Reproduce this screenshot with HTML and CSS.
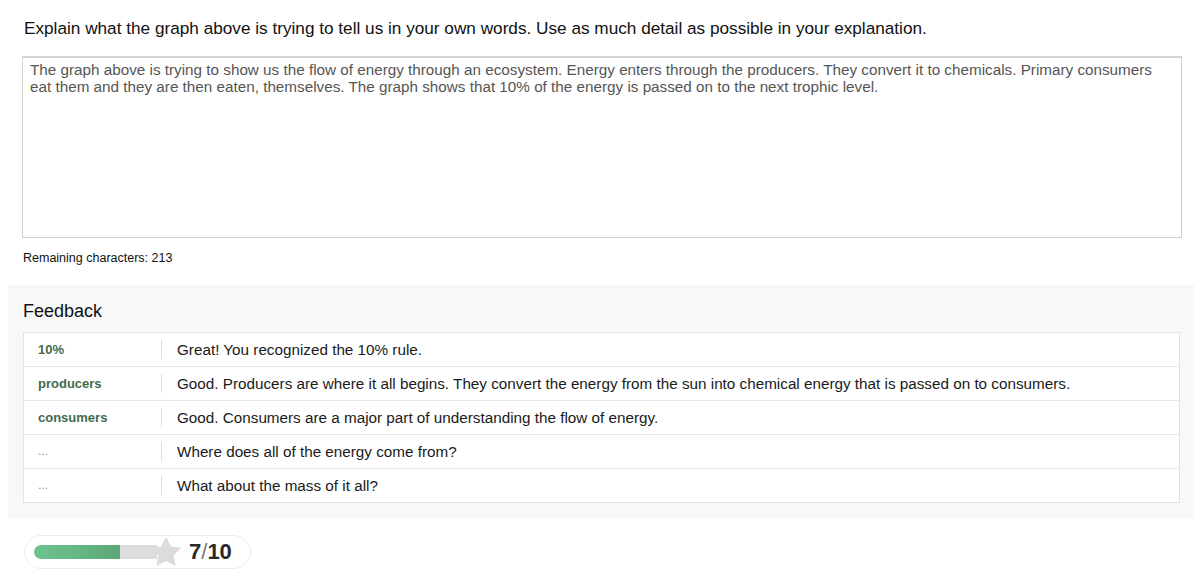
FILE: index.html
```html
<!DOCTYPE html>
<html>
<head>
<meta charset="utf-8">
<link rel="stylesheet" href="styles.css">
</head>
<body>
<div class="page">
  <p class="question">Explain what the graph above is trying to tell us in your own words. Use as much detail as possible in your explanation.</p>
  <div class="answer">The graph above is trying to show us the flow of energy through an ecosystem. Energy enters through the producers. They convert it to chemicals. Primary consumers eat them and they are then eaten, themselves. The graph shows that 10% of the energy is passed on to the next trophic level.</div>
  <p class="remaining">Remaining characters: 213</p>
</div>
<section class="feedback">
  <h2 class="fb-title">Feedback</h2>
  <div class="fb-table">
    <div class="fb-row"><div class="fb-key">10%</div><div class="fb-text">Great! You recognized the 10% rule.</div></div>
    <div class="fb-row"><div class="fb-key">producers</div><div class="fb-text">Good. Producers are where it all begins. They convert the energy from the sun into chemical energy that is passed on to consumers.</div></div>
    <div class="fb-row"><div class="fb-key">consumers</div><div class="fb-text">Good. Consumers are a major part of understanding the flow of energy.</div></div>
    <div class="fb-row"><div class="fb-key dim">...</div><div class="fb-text">Where does all of the energy come from?</div></div>
    <div class="fb-row"><div class="fb-key dim">...</div><div class="fb-text">What about the mass of it all?</div></div>
  </div>
</section>
<div class="score-wrap">
  <div class="score">
    <div class="bar"><div class="bar-fill" style="width:70%"></div></div>
    <svg class="star" width="32" height="32" viewBox="0 0 24 24"><path d="M12 1.8l3.1 6.6 7.2.9-5.3 5 1.4 7.1L12 17.9l-6.4 3.5 1.4-7.1-5.3-5 7.2-.9z" fill="#dcdcdc" stroke="#dcdcdc" stroke-width="1.4" stroke-linejoin="round"/></svg>
    <div class="score-num">7<span class="slash">/</span>10</div>
  </div>
</div>
</body>
</html>
```
FILE: styles.css
```css
html, body {
  margin: 0;
  padding: 0;
  background: #fff;
  font-family: "Liberation Sans", Arial, sans-serif;
  color: #111;
}
.page {
  padding: 0 17px 0 22px;
}
.question {
  margin: 0;
  padding-top: 18px;
  padding-left: 2px;
  font-size: 17.2px;
  line-height: 20px;
  color: #111;
}
.answer {
  margin-top: 18px;
  height: 171px;
  border: 1px solid #cfcfcf;
  border-top: 2px solid #d6d6d6;
  padding: 3px 7px 5px;
  font-size: 15.25px;
  line-height: 17px;
  color: #555;
}
.remaining {
  margin: 12px 0 0 1px;
  font-size: 12.5px;
  line-height: 16px;
  color: #111;
}
.feedback {
  margin: 19px 5px 0 8px;
  background: #f8f8f8;
  padding: 16px 14px 15px 15px;
}
.fb-title {
  margin: 0 0 10px 0;
  font-weight: normal;
  font-size: 18px;
  line-height: 21px;
  color: #111;
}
.fb-table {
  background: #fff;
  border: 1px solid #e2e2e2;
}
.fb-row {
  display: flex;
  align-items: center;
  height: 33px;
  border-top: 1px solid #e6e6e6;
}
.fb-row:first-child {
  border-top: none;
}
.fb-key {
  width: 123px;
  padding-left: 14px;
  font-size: 13px;
  font-weight: bold;
  color: #3f6b4d;
  box-sizing: content-box;
  border-right: 1px solid #dddddd;
  line-height: 19px;
}
.fb-key.dim {
  font-weight: normal;
  color: #999;
  font-size: 12px;
}
.fb-text {
  padding-left: 15px;
  font-size: 15.25px;
  color: #1a1a1a;
}
.score-wrap {
  padding: 17px 0 0 24px;
}
.score {
  display: inline-flex;
  align-items: center;
  height: 32px;
  border: 1px solid #ececec;
  border-radius: 17px;
  padding: 0 18px 0 9px;
}
.bar {
  width: 123px;
  height: 14px;
  background: #dcdcdc;
  border-radius: 7px 0 0 7px;
  overflow: hidden;
}
.bar-fill {
  height: 100%;
  background: linear-gradient(90deg, #6fc48e, #5aa877);
  border-radius: 7px 0 0 7px;
}
.star {
  margin-left: -7px;
  display: block;
}
.score-num {
  margin-left: 7px;
  font-size: 22px;
  font-weight: bold;
  color: #2a2a2a;
}
.slash {
  color: #777;
  font-weight: normal;
}
```
